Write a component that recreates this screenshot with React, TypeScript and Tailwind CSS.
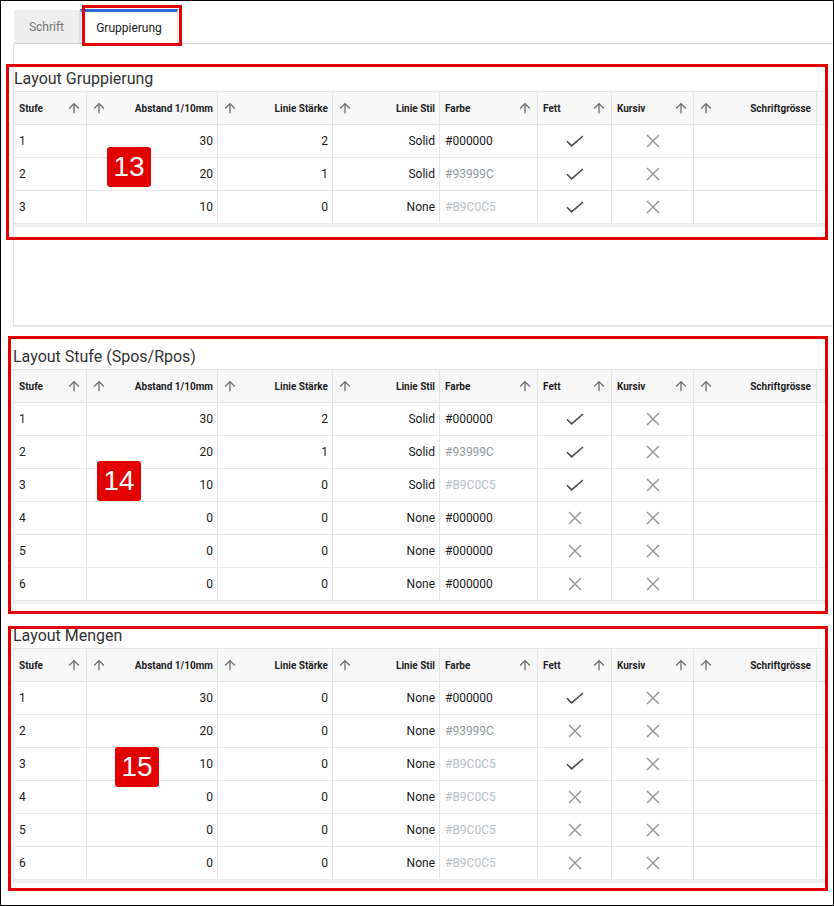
import React from "react";

type Row = [string, string, string, string, string, boolean, boolean];

const GRUPPIERUNG: Row[] = [
  ["1", "30", "2", "Solid", "#000000", true, false],
  ["2", "20", "1", "Solid", "#93999C", true, false],
  ["3", "10", "0", "None", "#B9C0C5", true, false],
];

const STUFE: Row[] = [
  ["1", "30", "2", "Solid", "#000000", true, false],
  ["2", "20", "1", "Solid", "#93999C", true, false],
  ["3", "10", "0", "Solid", "#B9C0C5", true, false],
  ["4", "0", "0", "None", "#000000", false, false],
  ["5", "0", "0", "None", "#000000", false, false],
  ["6", "0", "0", "None", "#000000", false, false],
];

const MENGEN: Row[] = [
  ["1", "30", "0", "None", "#000000", true, false],
  ["2", "20", "0", "None", "#93999C", false, false],
  ["3", "10", "0", "None", "#B9C0C5", true, false],
  ["4", "0", "0", "None", "#B9C0C5", false, false],
  ["5", "0", "0", "None", "#B9C0C5", false, false],
  ["6", "0", "0", "None", "#B9C0C5", false, false],
];

const colorText: Record<string, string> = {
  "#000000": "text-[#1a1a1a]",
  "#93999C": "text-[#93999c]",
  "#B9C0C5": "text-[#b9c0c5]",
};

function SortArrow() {
  return (
    <svg className="block size-[16px] shrink-0" viewBox="0 0 24 24" fill="#707070">
      <path d="M4 12l1.41 1.41L11 7.83V20h2V7.83l5.58 5.59L20 12l-8-8-8 8z" />
    </svg>
  );
}

function Check() {
  return (
    <svg className="block w-[18px] h-[12px]" viewBox="0 0 18 12" fill="none">
      <path d="M1 6.2l4.6 4.6L17 1" stroke="#4a4a4a" strokeWidth="1.6" />
    </svg>
  );
}

function Cross() {
  return (
    <svg className="block size-[14px]" viewBox="0 0 14 14" fill="none">
      <path d="M1 1l12 12M13 1L1 13" stroke="#999" strokeWidth="1.5" />
    </svg>
  );
}

const cell = "h-full border-r border-[#e4e4e4] flex items-center shrink-0";

function HeaderRow() {
  return (
    <div className="flex h-[33px] bg-[#f7f7f7] border-b border-[#e4e4e4] text-[10px] font-bold text-[#1e1e1e]">
      <div className={`${cell} w-[73px] justify-between pl-[5px] pr-[4px]`}>
        <span>Stufe</span>
        <SortArrow />
      </div>
      <div className={`${cell} w-[131px] justify-between pl-[4px] pr-[4px]`}>
        <SortArrow />
        <span>Abstand 1/10mm</span>
      </div>
      <div className={`${cell} w-[115px] justify-between pl-[4px] pr-[4px]`}>
        <SortArrow />
        <span>Linie Stärke</span>
      </div>
      <div className={`${cell} w-[107px] justify-between pl-[4px] pr-[4px]`}>
        <SortArrow />
        <span>Linie Stil</span>
      </div>
      <div className={`${cell} w-[98px] justify-between pl-[5px] pr-[4px]`}>
        <span>Farbe</span>
        <SortArrow />
      </div>
      <div className={`${cell} w-[74px] justify-between pl-[5px] pr-[4px]`}>
        <span>Fett</span>
        <SortArrow />
      </div>
      <div className={`${cell} w-[82px] justify-between pl-[5px] pr-[4px]`}>
        <span>Kursiv</span>
        <SortArrow />
      </div>
      <div className={`${cell} w-[123px] justify-between pl-[4px] pr-[5px]`}>
        <SortArrow />
        <span>Schriftgrösse</span>
      </div>
      <div className="flex-1" />
    </div>
  );
}

function BodyRow({ row }: { row: Row }) {
  const [stufe, abstand, staerke, stil, farbe, fett, kursiv] = row;
  return (
    <div className="flex h-[33px] border-b border-[#e8e8e8] text-[12px] text-[#1a1a1a]">
      <div className={`${cell} w-[73px] pl-[5px]`}>{stufe}</div>
      <div className={`${cell} w-[131px] justify-end pr-[4px]`}>{abstand}</div>
      <div className={`${cell} w-[115px] justify-end pr-[4px]`}>{staerke}</div>
      <div className={`${cell} w-[107px] justify-end pr-[4px]`}>{stil}</div>
      <div className={`${cell} w-[98px] pl-[5px] ${colorText[farbe]}`}>{farbe}</div>
      <div className={`${cell} w-[74px] justify-center`}>{fett ? <Check /> : <Cross />}</div>
      <div className={`${cell} w-[82px] justify-center`}>{kursiv ? <Check /> : <Cross />}</div>
      <div className={`${cell} w-[123px]`} />
      <div className="flex-1 border-r border-[#e4e4e4]" />
    </div>
  );
}

function LayoutGrid({ rows, bordered }: { rows: Row[]; bordered?: boolean }) {
  return (
    <div className={`w-[813px] border-t border-[#e4e4e4] ${bordered ? "border-l" : ""}`}>
      <HeaderRow />
      {rows.map((r) => (
        <BodyRow key={r[0]} row={r} />
      ))}
      <div className="h-[3px] bg-[#f0f0f0]" />
    </div>
  );
}

function Title({ children }: { children: React.ReactNode }) {
  return <div className="h-[24px] leading-[24px] text-[16px] text-[#333]">{children}</div>;
}

function Tabs() {
  return (
    <div className="ml-[13px] mt-[9px] h-[34px] flex border-b border-[#d4d4d4] text-[12px]">
      <div className="w-[66px] h-[33px] bg-[#eeeeee] text-[#777] flex items-center justify-center border-r border-[#e0e0e0]">
        Schrift
      </div>
      <div className="w-[98px] h-[34px] -mt-[1px] bg-white text-[#222] flex items-center justify-center border-t-[3px] border-t-[#2a6bd6] border-x border-x-[#dcdcdc]">
        Gruppierung
      </div>
    </div>
  );
}

function Badge({ n, pos }: { n: string; pos: string }) {
  return (
    <div
      className={`absolute ${pos} w-[44px] h-[40px] rounded-[3px] bg-[#e30000] text-white flex items-center justify-center text-[28px] font-['Liberation_Sans',Arial,sans-serif]`}
    >
      {n}
    </div>
  );
}

export default function App() {
  return (
    <div className="relative w-[834px] h-[906px] overflow-hidden border border-black bg-white font-['Roboto',sans-serif]">
      <Tabs />

      <div className="ml-[12px] h-[282px] pt-[23px] border-l border-b border-[#e2e2e2] shadow-[0_1px_1px_rgba(0,0,0,0.06)]">
        <Title>Layout Gruppierung</Title>
        <LayoutGrid rows={GRUPPIERUNG} />
      </div>

      <div className="ml-[12px] mt-[19px]">
        <Title>Layout Stufe (Spos/Rpos)</Title>
        <LayoutGrid rows={STUFE} bordered />
      </div>

      <div className="ml-[12px] mt-[20px]">
        <Title>Layout Mengen</Title>
        <LayoutGrid rows={MENGEN} bordered />
      </div>

      {/* callout frames */}
      <div className="absolute left-[81px] top-[4px] w-[100px] h-[41px] border-[3px] border-[#e30000]" />
      <div className="absolute left-[5px] top-[63px] w-[822px] h-[176px] border-[3px] border-[#e30000]" />
      <div className="absolute left-[7px] top-[335px] w-[820px] h-[278px] border-[3px] border-[#e30000]" />
      <div className="absolute left-[7px] top-[625px] w-[820px] h-[265px] border-[3px] border-[#e30000]" />

      <Badge n="13" pos="left-[106px] top-[146px]" />
      <Badge n="14" pos="left-[96px] top-[460px]" />
      <Badge n="15" pos="left-[114px] top-[746px]" />
    </div>
  );
}
